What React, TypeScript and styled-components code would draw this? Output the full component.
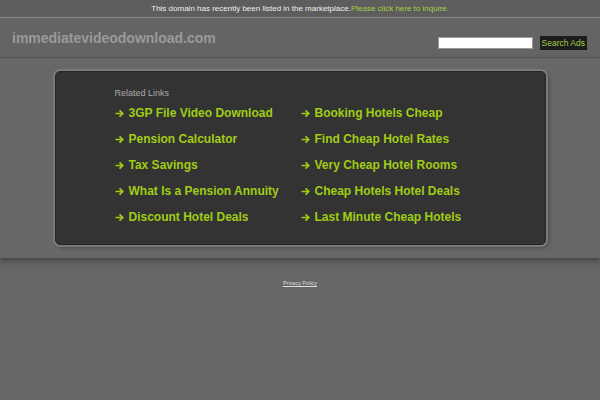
import React from "react";
import styled, { createGlobalStyle } from "styled-components";

const GlobalStyle = createGlobalStyle`
  html, body {
    margin: 0;
    padding: 0;
    background-color: #666;
    font-family: "Liberation Sans", Arial, sans-serif;
  }
`;

const TopBar = styled.div`
  height: 17px;
  line-height: 17px;
  background-color: #5d5d5d;
  border-bottom: 1px solid #8c8c8c;
  text-align: center;
  font-size: 8px;
  color: #eee;
`;

const Inquire = styled.a`
  color: #a8cf45;
  text-decoration: none;
`;

const Header = styled.div`
  display: flex;
  justify-content: space-between;
  align-items: flex-start;
  height: 39px;
  padding: 0 13px 0 12px;
  background-color: #646464;
  border-bottom: 1px solid #555;
`;

const Domain = styled.div`
  margin-top: 12px;
  font-size: 14px;
  font-weight: bold;
  color: #9a9a9a;
`;

const SearchForm = styled.form`
  display: flex;
  align-items: center;
  gap: 7px;
  margin-top: 18px;
`;

const SearchInput = styled.input`
  width: 93px;
  height: 10px;
  padding: 0;
  border: 1px solid #999;
  background-color: #fff;
  outline: none;
`;

const SearchButton = styled.button`
  height: 14px;
  padding: 0 2px;
  border: 0;
  background-color: #1b1b1b;
  color: #a8cf45;
  font-family: "Liberation Sans", Arial, sans-serif;
  font-size: 8.5px;
  line-height: 14px;
`;

const Main = styled.div`
  padding: 13px 0 13px;
  background-color: #676767;
  box-shadow: 0 3px 6px rgba(0, 0, 0, 0.35);
`;

const LinkBox = styled.div`
  box-sizing: border-box;
  width: 491px;
  height: 174px;
  margin: 0 auto;
  padding: 15px 0 0 59px;
  background-color: #333;
  border: 1px solid #262626;
  border-radius: 5px;
  box-shadow: 0 0 0 2px #7a7a7a, 2px 2px 4px rgba(0, 0, 0, 0.4);
`;

const BoxTitle = styled.div`
  font-size: 9px;
  color: #aaa;
  height: 12px;
  line-height: 12px;
`;

const LinkGrid = styled.div`
  display: grid;
  grid-template-columns: 186px auto;
  grid-auto-rows: 26px;
  margin-top: 1px;
`;

const LinkItem = styled.a`
  display: flex;
  align-items: center;
  gap: 5px;
  font-size: 12px;
  font-weight: bold;
  color: #a0cc14;
  text-decoration: none;
  white-space: nowrap;
`;

const ArrowIcon = styled.svg`
  flex: none;
  width: 9px;
  height: 9px;
`;

const Footer = styled.div`
  padding-top: 13px;
  text-align: center;
`;

const Privacy = styled.a`
  font-size: 5.5px;
  color: #ddd;
  text-decoration: underline;
`;

const links = [
  "3GP File Video Download",
  "Booking Hotels Cheap",
  "Pension Calculator",
  "Find Cheap Hotel Rates",
  "Tax Savings",
  "Very Cheap Hotel Rooms",
  "What Is a Pension Annuity",
  "Cheap Hotels Hotel Deals",
  "Discount Hotel Deals",
  "Last Minute Cheap Hotels",
];

const Arrow = () => (
  <ArrowIcon viewBox="0 0 9 9">
    <path
      d="M0.5 4.5H7.5M4.5 1.3L7.8 4.5L4.5 7.7"
      fill="none"
      stroke="currentColor"
      strokeWidth="1.7"
    />
  </ArrowIcon>
);

const App: React.FunctionComponent<{}> = () => {
  return (
    <>
      <GlobalStyle />
      <TopBar>
        This domain has recently been listed in the marketplace.
        <Inquire href="#">Please click here to inquire.</Inquire>
      </TopBar>
      <Header>
        <Domain>immediatevideodownload.com</Domain>
        <SearchForm onSubmit={(e) => e.preventDefault()}>
          <SearchInput type="text" />
          <SearchButton type="submit">Search Ads</SearchButton>
        </SearchForm>
      </Header>
      <Main>
        <LinkBox>
          <BoxTitle>Related Links</BoxTitle>
          <LinkGrid>
            {links.map((l, i) => (
              <LinkItem key={i} href="#">
                <Arrow />
                {l}
              </LinkItem>
            ))}
          </LinkGrid>
        </LinkBox>
      </Main>
      <Footer>
        <Privacy href="#">Privacy Policy</Privacy>
      </Footer>
    </>
  );
};

export default App;
